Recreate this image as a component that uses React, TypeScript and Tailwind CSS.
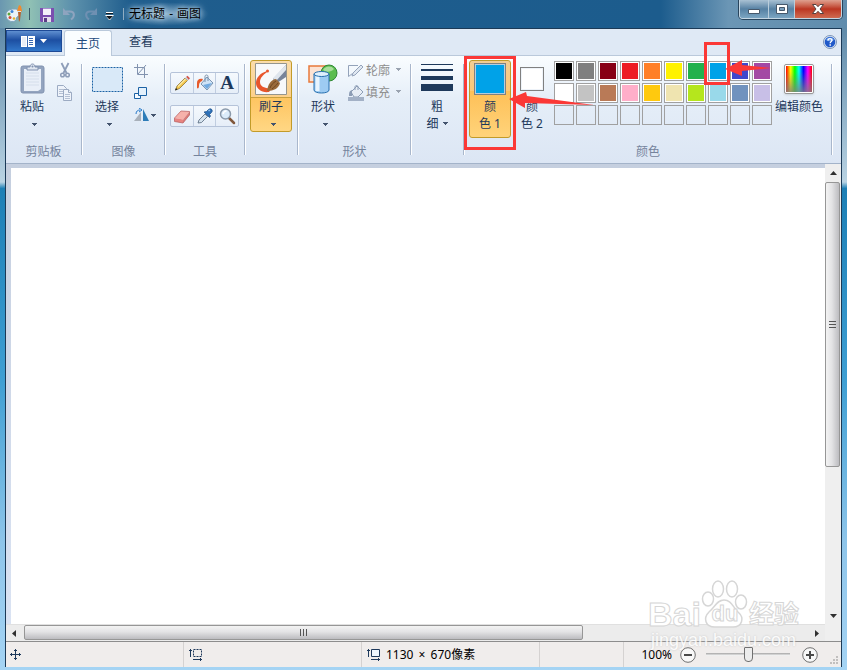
import type { ReactNode } from 'react'

const palette = [
    { name: '黑色', color: 'bg-black' },
    { name: '灰色-50%', color: 'bg-[#7f7f7f]' },
    { name: '深红色', color: 'bg-[#880015]' },
    { name: '红色', color: 'bg-[#ed1c24]' },
    { name: '橙色', color: 'bg-[#ff7f27]' },
    { name: '黄色', color: 'bg-[#fff200]' },
    { name: '绿色', color: 'bg-[#22b14c]' },
    { name: '青绿', color: 'bg-[#00a2e8]' },
    { name: '靛青', color: 'bg-[#3f48cc]' },
    { name: '紫色', color: 'bg-[#a349a4]' },
    { name: '白色', color: 'bg-white' },
    { name: '灰色-25%', color: 'bg-[#c3c3c3]' },
    { name: '褐色', color: 'bg-[#b97a57]' },
    { name: '玫瑰色', color: 'bg-[#ffaec9]' },
    { name: '金色', color: 'bg-[#ffc90e]' },
    { name: '浅黄色', color: 'bg-[#efe4b0]' },
    { name: '酸橙色', color: 'bg-[#b5e61d]' },
    { name: '淡青绿色', color: 'bg-[#99d9ea]' },
    { name: '蓝灰色', color: 'bg-[#7092be]' },
    { name: '淡紫色', color: 'bg-[#c8bfe7]' },
]

function Caret({ className = 'text-[#44546e]' }: { className?: string }) {
    return (
        <svg className={`shrink-0 ${className}`} width="5" height="3" viewBox="0 0 5 3" shapeRendering="crispEdges">
            <path d="M0 0h5v1H4v1H3v1H2V2H1V1H0z" fill="currentColor" />
        </svg>
    )
}

function Separator() {
    return <div className="my-2 w-[2px] shrink-0 border-r border-l border-r-white border-l-[#a9b7cc]" />
}

function Group({ label, className, children }: { label?: string; className: string; children: ReactNode }) {
    return (
        <section className={`flex shrink-0 flex-col pt-1 ${className}`}>
            <div className="flex flex-1 items-start">{children}</div>
            <h2 className="mb-[3px] h-4 text-center text-[#74839c]">{label}</h2>
        </section>
    )
}

function BigButton({ label, children, className = 'w-[42px]' }: { label: string; children: ReactNode; className?: string }) {
    return (
        <button className={`flex h-[72px] flex-col items-center pt-[3px] ${className}`}>
            <span className="flex h-8 items-center justify-center">{children}</span>
            <span className="mt-1 leading-4">{label}</span>
            <span className="mt-2 ml-1"><Caret /></span>
        </button>
    )
}

function PaintLogo() {
    return (
        <svg width="18" height="18" viewBox="0 0 18 18">
            <path d="M1 10C1 6 5 4 9 4c4 0 6 2 6 5 0 2-2 2-3 3s0 3-2 4c-4 2-9-1-9-6z" fill="#e9f2f8" stroke="#7fa3bc" />
            <circle cx="4" cy="9" r="1.500" fill="#5ba53b" />
            <circle cx="7" cy="6.500" r="1.500" fill="#3d82d6" />
            <circle cx="5" cy="12.500" r="1.500" fill="#d64a35" />
            <circle cx="9" cy="13.500" r="1.300" fill="#e2b32b" />
            <path d="M14 0l2 1 1 5-2 2-3-2z" fill="#f08a2c" />
            <path d="M13 7h3l-1 8-1 2z" fill="#b5612a" />
            <path d="M12 6h4v1h-4z" fill="#dce4ea" />
        </svg>
    )
}

function TitleBar() {
    return (
        <header className="flex h-7 shrink-0 items-start justify-between">
            <div className="flex h-7 items-center">
                <PaintLogo />
                <div className="ml-[6px] h-3 w-px bg-[#3b5c6b]" />
                <button aria-label="保存" className="mt-px ml-[10px]">
                    <svg width="14" height="14" viewBox="0 0 14 14">
                        <path d="M0 0h14v14H1L0 13z" fill="#7b4fb0" />
                        <path d="M3 0h8v7H3z" fill="#f3f1fa" />
                        <path d="M3 0h8v1H3z" fill="#a98bd0" />
                        <path d="M3 9h8v5H3z" fill="#e3dcec" />
                        <path d="M4 10h3v4H4z" fill="#5a3b86" />
                    </svg>
                </button>
                <button aria-label="撤消" className="ml-2 text-[#8ea4bf]">
                    <svg width="14" height="14" viewBox="0 0 14 14" fill="none" stroke="currentColor">
                        <path d="M4 4.500h4c5 0 5 5 1 8" strokeWidth="2" />
                        <path d="M1 1v7h7z" fill="currentColor" stroke="none" />
                    </svg>
                </button>
                <button aria-label="重做" className="ml-2 text-[#6f90b2]">
                    <svg width="14" height="14" viewBox="0 0 14 14" fill="none" stroke="currentColor">
                        <path d="M10 4.500H6C1 4.500 1 9.500 5 12.500" strokeWidth="2" />
                        <path d="M13 1v7H6z" fill="currentColor" stroke="none" />
                    </svg>
                </button>
                <button aria-label="自定义快速访问工具栏" className="mt-[3px] ml-[7px]">
                    <svg width="9" height="8" viewBox="0 0 9 8">
                        <path d="M1 0h7v2H1zM0 3h9L5 8H4z" fill="#fff" />
                        <path d="M1 1h7v1H1zM1 4h7L4.500 7.500z" fill="#101820" />
                    </svg>
                </button>
                <div className="ml-[9px] h-3 w-px bg-[#8fabc1]" />
                <h1 className="-ml-[3px] bg-radial from-[#b5d0e3c0] to-transparent to-70% px-2 py-1 text-black [text-shadow:0_0_5px_#cfe1ee,0_0_9px_#b5d0e3]">
                    无标题 <span className="mx-px">-</span> 画图
                </h1>
            </div>
            <div className="flex h-[19px] overflow-hidden rounded-b-[4px] border border-t-0 border-[#c4d6e3] shadow-[0_0_0_1px_#29455d]">
                <button aria-label="最小化" className="flex w-7 items-center justify-center bg-linear-to-b from-[#a9c1d3] via-[#5681a3] via-50% to-[#7ba5c2] pt-1">
                    <svg width="12" height="5" viewBox="0 0 12 5"><path d="M.5.5h11v4H.5z" fill="#fff" stroke="#46586b" /></svg>
                </button>
                <button aria-label="最大化" className="flex w-[27px] items-center justify-center border-r border-l border-[#b9cddb] bg-linear-to-b from-[#a9c1d3] via-[#5681a3] via-50% to-[#7ba5c2]">
                    <svg width="12" height="10" viewBox="0 0 12 10">
                        <path d="M.5.5h11v9H.5z" fill="#fff" stroke="#46586b" />
                        <path d="M3.500 3.500h5v3h-5z" fill="#7ba0bd" stroke="#46586b" />
                    </svg>
                </button>
                <button aria-label="关闭" className="flex w-[46px] items-center justify-center bg-linear-to-b from-[#dea08f] via-[#bb3521] via-50% to-[#cf6a50]">
                    <svg width="12" height="10" viewBox="0 0 12 10">
                        <path d="M.5.5h3.500l2 2.200L8 .5h3.500L8 5l3.500 4.500H8L6 7.300 4 9.500H.5L4 5z" fill="#fff" stroke="#57413f" />
                    </svg>
                </button>
            </div>
        </header>
    )
}

function TabRow() {
    return (
        <nav className="flex h-[27px] shrink-0 items-end border-b border-[#bac9db] bg-[#dfe9f5]">
            <button aria-label="画图" className="mb-[3px] flex h-[22px] w-14 items-center justify-center gap-[5px] border border-[#1e4a96] bg-linear-to-b from-[#5f8fd0] via-[#1d4fa2] via-45% to-[#3277c9]">
                <svg width="14" height="11" viewBox="0 0 14 11" shapeRendering="crispEdges">
                    <path d="M0 0h14v11H0z" fill="#fff" />
                    <path d="M6 0h1v11H6zM8 2h4v1H8zM8 4h4v1H8zM8 6h4v1H8zM8 8h4v1H8z" fill="#3a69b0" />
                    <path d="M1 1h4v9H1z" fill="#e8edf5" />
                </svg>
                <svg width="7" height="4" viewBox="0 0 7 4"><path d="M0 0h7L3.500 4z" fill="#fff" /></svg>
            </button>
            <a href="#home" className="-mb-px ml-[2px] flex h-[26px] w-12 items-center justify-center rounded-t-[3px] border border-b-0 border-[#bac9db] bg-[#fafdff] text-[#1e4a7d]">
                主页
            </a>
            <a href="#view" className="flex h-[26px] w-[58px] items-center justify-center text-[#1e395b]">查看</a>
            <button aria-label="帮助" className="mr-[4px] mb-[6px] ml-auto">
                <svg width="14" height="14" viewBox="0 0 14 14">
                    <circle cx="7" cy="7" r="6.500" fill="#dbe8f8" stroke="#7b93b5" />
                    <circle cx="7" cy="7" r="5.300" fill="#2059c9" />
                    <path d="M3 5a4.500 4.500 0 018 0c-2 1-5 2-8 0z" fill="#6ea2ec" />
                    <path d="M5 5.500C5 3 9 3 9 5.300 9 6.500 7.200 6.500 7.200 8.200M7.200 9.300v1.400" fill="none" stroke="#fff" strokeWidth="1.400" />
                </svg>
            </button>
        </nav>
    )
}

function ClipboardGroup() {
    return (
        <Group label="剪贴板" className="w-[75px]">
            <BigButton label="粘贴" className="ml-[5px] w-[42px]">
                <svg width="26" height="32" viewBox="0 0 26 32">
                    <rect x="2" y="3" width="23" height="27" rx="2" fill="#93a4bf" stroke="#8192b0" />
                    <path d="M5 6h17v20l-3 2H5z" fill="#e9eff8" />
                    <path d="M7 10h13M7 13h13M7 16h13M7 19h13M7 22h13" stroke="#d5deeb" />
                    <path d="M8 7V4h3c0-4 5-4 5 0h3v3z" fill="#dfe6f0" stroke="#8192b0" />
                    <circle cx="13.500" cy="3.500" r="1" fill="#8192b0" />
                </svg>
            </BigButton>
            <div className="mt-[2px] ml-1 flex flex-col gap-[6px]">
                <button aria-label="剪切">
                    <svg width="16" height="17" viewBox="0 0 16 17" fill="none" stroke="#8d9db8">
                        <path d="M4.500 1l5 10M11.500 1l-5 10" strokeWidth="1.800" />
                        <circle cx="5.500" cy="13" r="1.800" strokeWidth="1.500" />
                        <circle cx="10.500" cy="13" r="1.800" strokeWidth="1.500" />
                    </svg>
                </button>
                <button aria-label="复制">
                    <svg width="16" height="17" viewBox="0 0 16 17" fill="#eef3fa" stroke="#9cabc3">
                        <path d="M.5.5h6l3 3v8h-9z" />
                        <path d="M2 4.500h4M2 6.500h4M2 8.500h4" stroke="#b4c0d3" />
                        <path d="M6.500 4.500h5l3 3v8h-8z" />
                        <path d="M11.500 4.500v3h3" />
                        <path d="M8 9.500h5M8 11.500h5M8 13.500h5" stroke="#b4c0d3" />
                    </svg>
                </button>
            </div>
        </Group>
    )
}

function ImageGroup() {
    return (
        <Group label="图像" className="w-[81px]">
            <BigButton label="选择" className="ml-[3px] w-[42px]">
                <svg width="32" height="26" viewBox="0 0 32 26">
                    <rect x="1.500" y="1.500" width="30" height="24" fill="#d9e9f8" stroke="#1c62a5" strokeDasharray="2 1" />
                </svg>
            </BigButton>
            <div className="mt-1 ml-[6px] flex flex-col items-start gap-2">
                <button aria-label="裁剪">
                    <svg width="14" height="14" viewBox="0 0 14 14" fill="none" stroke="#8293af">
                        <path d="M3.500 0v10.500H14M0 3.500h10.500V14" />
                        <path d="M4 10l8-9" />
                    </svg>
                </button>
                <button aria-label="重新调整大小">
                    <svg width="14" height="14" viewBox="0 0 14 14" fill="#f5faff" stroke="#1c62a5">
                        <path d="M.5 7.500h6v5h-6z" />
                        <path d="M4.500 1.500h8v8h-8z" fill="#e4f1fc" />
                    </svg>
                </button>
                <button aria-label="旋转" className="flex items-center gap-px">
                    <svg width="16" height="14" viewBox="0 0 16 14">
                        <path d="M7 4v9H0z" fill="#a8b0ba" />
                        <path d="M9 1l6 12H9z" fill="#2d7cb8" />
                        <path d="M2 6c0-3 2-4 4-4M5 0l3 2-3 2" fill="none" stroke="#2679c9" />
                    </svg>
                    <Caret />
                </button>
            </div>
        </Group>
    )
}

function ToolRow({ tools }: { tools: { name: string; icon: ReactNode }[] }) {
    return (
        <div className="flex h-[22px] w-[69px] divide-x divide-[#c0cde0] rounded-[2px] border border-[#b5c3d9] bg-linear-to-b from-[#f5f9fd] to-[#e6eef8]">
            {tools.map((tool) => (
                <button key={tool.name} aria-label={tool.name} className="flex flex-1 items-center justify-center">
                    {tool.icon}
                </button>
            ))}
        </div>
    )
}

function ToolsGroup() {
    const pencil = (
        <svg width="18" height="18" viewBox="0 0 18 18">
            <path d="M2.500 16l1.500-4 8-8 2.500 2.500-8 8z" fill="#f3c64c" stroke="#8c7334" strokeWidth=".8" />
            <path d="M5 12.500l7.500-7.500" stroke="#fbe9a4" strokeWidth="1.300" />
            <path d="M13 3l1.500-1.200 2.500 2.500L15.500 6z" fill="#d4574c" />
            <path d="M12 4l1-1 2.500 2.500-1 1z" fill="#c9d2dd" />
            <path d="M2 16.500l1-2.500 1.500 1.500z" fill="#202020" />
        </svg>
    )
    const bucket = (
        <svg width="18" height="18" viewBox="0 0 18 18">
            <path d="M5 10l6-7 6 6-6 7z" fill="#cfe3f6" stroke="#627f9f" strokeWidth=".8" />
            <path d="M7 11l9-2-5 6z" fill="#70a9df" />
            <path d="M9 8V2.500c0-2 3-2 3 0V7" fill="none" stroke="#7990aa" />
            <path d="M7 5C3 4 1 6 1 9v5c1 1 2 0 2-2 0-3 1-4 3-5z" fill="#e75b2b" />
        </svg>
    )
    const text = <span className="font-['Liberation_Serif',serif] text-[19px] leading-5 font-bold text-[#1e395b]">A</span>
    const eraser = (
        <svg width="18" height="18" viewBox="0 0 18 18">
            <path d="M1.500 11L8 4l8.500.5-6.500 8z" fill="#f6b1aa" />
            <path d="M1.500 11l8.500 1.500V16l-8.500-1.500z" fill="#e88480" />
            <path d="M10 12.500l6.500-8V8L10 16z" fill="#d97c79" />
            <path d="M1.500 11L8 4l8.500.5V8L10 16l-8.500-1.500z" fill="none" stroke="#b5595a" strokeWidth=".7" />
        </svg>
    )
    const picker = (
        <svg width="18" height="18" viewBox="0 0 18 18">
            <path d="M2 16l1-3 6-6 2.500 2.500-6 6z" fill="#d5e2ed" stroke="#54677c" strokeWidth=".8" />
            <path d="M8 5l5.500 5.500 1-1.500-1-1.500 2-2c2-2-.5-5-3-3l-2 2z" fill="#2c70b8" stroke="#1e4d83" strokeWidth=".7" />
            <path d="M12.500 4l1.500-1" stroke="#8ec0ee" strokeWidth="1.500" />
        </svg>
    )
    const magnifier = (
        <svg width="18" height="18" viewBox="0 0 18 18">
            <path d="M11 11l5 5" stroke="#80583c" strokeWidth="2.500" strokeLinecap="round" />
            <circle cx="7.500" cy="7" r="5" fill="#dbecfa" stroke="#8b9aab" strokeWidth="1.500" />
            <path d="M5 7c.5-2 1.500-3 3.500-3" fill="none" stroke="#fff" strokeWidth="1.500" />
        </svg>
    )
    return (
        <Group label="工具" className="w-[78px]">
            <div className="mt-3 ml-1 flex flex-col gap-[11px]">
                <ToolRow tools={[{ name: '铅笔', icon: pencil }, { name: '用颜色填充', icon: bucket }, { name: '文本', icon: text }]} />
                <ToolRow tools={[{ name: '橡皮擦', icon: eraser }, { name: '颜色选取器', icon: picker }, { name: '放大镜', icon: magnifier }]} />
            </div>
        </Group>
    )
}

function BrushGroup() {
    return (
        <Group className="w-[51px]">
            <BigButton
                label="刷子"
                className="ml-1 w-[42px] rounded-[3px] border border-[#c29b29] bg-[linear-gradient(to_bottom,#fbdcaa,#fcd08a_36px,#c9a03c_36px,#c9a03c_37px,#fec561_37px,#ffd784)] pt-[2px]!"
            >
                <svg width="32" height="32" viewBox="0 0 32 32">
                    <path d="M.5.5h31v31H.5z" fill="#f7f8fa" stroke="#95958d" />
                    <path d="M31 2v12l-9 6-4-4z" fill="#778399" />
                    <path d="M31 2L18 15l3 3L31 7z" fill="#dfe5ed" />
                    <path d="M12 8C5 10 1 15 1 20c0 6 6 10 13 9l3-4c-6 1-12-1-12-6 0-4 3-7 7-10z" fill="#e8552b" />
                    <circle cx="12.500" cy="8" r="1.500" fill="#e8552b" />
                    <path d="M12 28c1-6 3-11 9-12l4 4c-1 5-6 8-13 8z" fill="#9a6a3b" />
                    <path d="M15 25c1-3 3-5 6-7M17 26c2-2 4-3 6-6" fill="none" stroke="#6f4620" />
                </svg>
            </BigButton>
        </Group>
    )
}

function ShapesGroup() {
    return (
        <Group label="形状" className="w-[111px]">
            <BigButton label="形状" className="ml-[3px] w-[42px]">
                <svg width="30" height="30" viewBox="0 0 30 30">
                    <rect x="1" y="2" width="18" height="16" fill="#fce3d3" stroke="#e8793b" strokeWidth="1.500" />
                    <circle cx="21" cy="9" r="8" fill="#5bbd4f" stroke="#318a36" />
                    <path d="M15 6c2-4 8-5 11-1-3 3-7 4-11 1z" fill="#a9dd9c" />
                    <path d="M6 10v16c0 4 15 4 15 0V10z" fill="#9dcbf2" stroke="#276fae" />
                    <path d="M9.500 12v15" stroke="#e8f5ff" strokeWidth="4" />
                    <ellipse cx="13.500" cy="10" rx="7.500" ry="2.500" fill="#dff0fd" stroke="#276fae" />
                </svg>
            </BigButton>
            <div className="mt-[3px] ml-1 flex flex-col gap-[6px] text-[#8d8d8d]">
                <button className="flex h-4 items-center">
                    <svg width="16" height="16" viewBox="0 0 16 16" fill="none" stroke="#94a3ba">
                        <path d="M10 2.500H.5v11l4-3" />
                        <path d="M4 13l1-3 8-8 2 2-8 8z" fill="#dfe7f1" />
                    </svg>
                    <span className="ml-[2px]">轮廓</span>
                    <span className="ml-[6px]"><Caret className="mb-1 inline text-[#9aa3b0]" /></span>
                </button>
                <button className="flex h-4 items-center">
                    <svg width="16" height="16" viewBox="0 0 16 16">
                        <path d="M3 7l6-6 6 6-5 5H6z" fill="#e7edf5" stroke="#8d9db5" />
                        <path d="M7 5V2c0-2 3-2 3 0v3" fill="none" stroke="#8d9db5" />
                        <path d="M4 5C1 6 1 8 1 11h3V8z" fill="#8d9db5" />
                        <path d="M0 12h16v4H0z" fill="#a3b1c6" />
                    </svg>
                    <span className="ml-[2px]">填充</span>
                    <span className="ml-[6px]"><Caret className="mb-1 inline text-[#9aa3b0]" /></span>
                </button>
            </div>
        </Group>
    )
}

function SizeGroup() {
    return (
        <Group className="w-[51px]">
            <button className="ml-1 flex w-[42px] flex-col items-center pt-1">
                <span className="flex w-8 flex-col">
                    <span className="h-px bg-[#1e395b]" />
                    <span className="mt-1 h-[2px] bg-[#1e395b]" />
                    <span className="mt-[5px] h-1 bg-[#1e395b]" />
                    <span className="mt-1 h-[7px] bg-[#1e395b]" />
                </span>
                <span className="mt-[7px] leading-[17px]">粗</span>
                <span className="flex items-center gap-1 leading-[17px]">细 <Caret /></span>
            </button>
        </Group>
    )
}

function ColorsGroup() {
    return (
        <Group label="颜色" className="relative w-[366px]">
            <button className="ml-1 flex h-[78px] w-[42px] flex-col items-center rounded-[3px] border border-[#c29b29] bg-[linear-gradient(to_bottom,#f3cd94,#fcc877_30px,#fec057_30px,#ffd37a)] pt-[2px]">
                <span className="h-8 w-8 border border-[#808080] bg-[#00a2e8] shadow-[inset_0_0_0_1px_#b9cddb]" />
                <span className="mt-[3px] leading-[17px]">颜<br />色 1</span>
            </button>
            <button className="flex h-[78px] w-[42px] flex-col items-center pt-[7px]">
                <span className="h-6 w-6 border border-[#808080] bg-white shadow-[inset_0_0_0_1px_#eef3f9]" />
                <span className="mt-[7px] leading-[17px]">颜<br />色 2</span>
            </button>
            <div className="mt-px ml-[1px] grid grid-cols-10 gap-[2px]">
                {palette.map((swatch) => (
                    <button key={swatch.name} aria-label={swatch.name} className="h-5 w-5 border border-[#a0a0a0] bg-white p-px">
                        <span className={`block h-full ${swatch.color}`} />
                    </button>
                ))}
                {Array.from({ length: 10 }, (_, i) => (
                    <button key={i} aria-label={`自定义颜色 ${i + 1}`} className="h-5 w-5 border border-[#a0a0a0]" />
                ))}
            </div>
            <button className="ml-[3px] flex w-12 flex-col items-center pt-1 whitespace-nowrap">
                <span className="flex h-[30px] w-[30px] rounded-[2px] border border-[#999] bg-white p-px shadow">
                    <span className="flex-1 bg-[linear-gradient(to_bottom,transparent_20%,#808080d0),linear-gradient(to_right,red,#ff0_18%,#0f0_34%,#0ff_50%,#00f_67%,#f0f_84%,red)]" />
                </span>
                <span className="mt-[5px] leading-4">编辑颜色</span>
            </button>

            <div className="absolute top-0 -left-px h-[94px] w-[52px] border-3 border-[#fb3836]" />
            <svg className="absolute top-9 left-11" width="85" height="17" viewBox="0 0 85 17" fill="#fb3836">
                <path d="M0 7L17 0l1 4 67 9-69-2v5z" />
            </svg>
            <div className="absolute -top-[14px] left-[239px] h-[43px] w-[26px] border-3 border-[#fb3836]" />
            <svg className="absolute top-1 left-[260px]" width="46" height="17" viewBox="0 0 46 17" fill="#fb3836">
                <path d="M0 9l17-9v5l29 3-29 3v5z" />
            </svg>
        </Group>
    )
}

function ScrollArrow({ label, path }: { label: string; path: string }) {
    return (
        <button aria-label={label} className="flex h-[17px] w-4 shrink-0 items-center justify-center">
            <svg width="7" height="7" viewBox="0 0 7 7"><path d={path} fill="#303030" /></svg>
        </button>
    )
}

function Workspace() {
    return (
        <main className="flex min-h-0 flex-1 bg-[#ececec]">
            <div className="flex min-w-0 flex-1 flex-col">
                <div className="flex flex-1 bg-linear-to-b from-[#c5cfdf] to-[#dae3f3] pt-1 pl-[5px]">
                    <div className="flex-1 bg-white" />
                </div>
                <div className="flex h-[17px] shrink-0 items-center border-t border-[#e0e0e0] bg-[#ececec]">
                    <ScrollArrow label="向左滚动" path="M5 0v7L1 3.500z" />
                    <div className="flex h-full flex-1">
                        <div className="ml-[2px] flex h-[15px] w-[71%] items-center justify-center gap-[2px] rounded-[2px] border border-[#969696] bg-linear-to-b from-[#f3f3f3] via-[#e3e3e5] via-45% to-[#bcbcc0]">
                            <i className="h-[7px] w-px bg-[#555]" />
                            <i className="h-[7px] w-px bg-[#555]" />
                            <i className="h-[7px] w-px bg-[#555]" />
                        </div>
                    </div>
                    <ScrollArrow label="向右滚动" path="M1 0l4 3.500L1 7z" />
                </div>
            </div>
            <div className="flex w-4 shrink-0 flex-col bg-[#efefef] pt-px pb-[17px]">
                <ScrollArrow label="向上滚动" path="M0 5h7L3.500 1z" />
                <div className="flex-1">
                    <div className="flex h-[67%] w-[15px] flex-col items-center justify-center gap-[2px] rounded-[2px] border border-[#969696] bg-linear-to-r from-[#f3f3f3] via-[#e3e3e5] via-45% to-[#bcbcc0]">
                        <i className="h-px w-[7px] bg-[#555]" />
                        <i className="h-px w-[7px] bg-[#555]" />
                        <i className="h-px w-[7px] bg-[#555]" />
                    </div>
                </div>
                <ScrollArrow label="向下滚动" path="M0 2h7L3.500 6z" />
            </div>
        </main>
    )
}

function StatusBar() {
    return (
        <footer className="flex h-[26px] shrink-0 border-t border-[#8d8d8d] bg-[#f0edec] text-black">
            <div className="flex w-[178px] items-center border-r border-[#d5d2d1] pl-1">
                <svg width="11" height="11" viewBox="0 0 11 11" shapeRendering="crispEdges">
                    <path d="M5 0h1v1h1v1H6v3h3V4h1v1h1v1h-1v1H9V6H6v3h1v1H6v1H5v-1H4V9h1V6H2v1H1V6H0V5h1V4h1v1h3V2H4V1h1z" fill="#1e395b" />
                </svg>
            </div>
            <div className="flex w-[178px] items-center border-r border-[#d5d2d1] pl-[5px]">
                <svg width="14" height="13" viewBox="0 0 14 13" fill="none" stroke="#1e395b">
                    <path d="M1.500 1v8M0 2.500h3M4 11.500h9M11.500 10v3" />
                    <path d="M4.500 1.500h8v7h-8z" strokeDasharray="2 1" />
                </svg>
            </div>
            <div className="flex w-[178px] items-center border-r border-[#d5d2d1] pl-[5px]">
                <svg width="14" height="13" viewBox="0 0 14 13" fill="none" stroke="#1e395b">
                    <path d="M1.500 1v8M0 2.500h3M4 11.500h9M11.500 10v3" />
                    <path d="M4.500 1.500h8v7h-8z" fill="#eef6fd" />
                </svg>
                <span className="ml-[5px]">1130 <span className="mx-[2px]">×</span> 670像素</span>
            </div>
            <div className="w-[84px] border-r border-[#d5d2d1]" />
            <div className="relative ml-auto flex items-center pr-[23px]">
                <label htmlFor="zoom">100%</label>
                <button aria-label="缩小" className="ml-2">
                    <svg width="16" height="16" viewBox="0 0 16 16">
                        <circle cx="8" cy="8" r="7.300" fill="#f8f8f8" stroke="#707070" />
                        <path d="M4 7h8v2H4z" fill="#4a4a4a" />
                    </svg>
                </button>
                <input
                    id="zoom"
                    type="range"
                    min="0"
                    max="100"
                    defaultValue="50"
                    className="mr-3 ml-[10px] h-4 w-[84px] appearance-none bg-linear-to-b from-[#a5a5a5] to-white bg-[length:100%_3px] bg-center bg-no-repeat [&::-webkit-slider-thumb]:h-[15px] [&::-webkit-slider-thumb]:w-[9px] [&::-webkit-slider-thumb]:appearance-none [&::-webkit-slider-thumb]:rounded-t-[1px] [&::-webkit-slider-thumb]:rounded-b-[4px] [&::-webkit-slider-thumb]:border [&::-webkit-slider-thumb]:border-[#707070] [&::-webkit-slider-thumb]:bg-[#ececec]"
                />
                <button aria-label="放大">
                    <svg width="16" height="16" viewBox="0 0 16 16">
                        <circle cx="8" cy="8" r="7.300" fill="#f8f8f8" stroke="#707070" />
                        <path d="M4 7h3V4h2v3h3v2H9v3H7V9H4z" fill="#4a4a4a" />
                    </svg>
                </button>
                <svg className="absolute right-[2px] bottom-[2px]" width="9" height="9" viewBox="0 0 9 9">
                    <path d="M6 0h2v2H6zM3 3h2v2H3zM6 3h2v2H6zM0 6h2v2H0zM3 6h2v2H3zM6 6h2v2H6z" fill="#c1bfbe" />
                </svg>
            </div>
        </footer>
    )
}

function Watermark() {
    return (
        <div className="pointer-events-none absolute right-12 bottom-[22px] flex flex-col items-center gap-1 font-['Liberation_Sans','Noto_Sans_CJK_SC',sans-serif] text-white select-none">
            <div className="flex items-end font-bold [-webkit-text-stroke:1px_#d6d6d6]">
                <span className="text-[34px] leading-7">Bai</span>
                <span className="relative flex h-12 w-12 items-end justify-center">
                    <svg className="absolute inset-0" width="48" height="48" viewBox="0 0 48 48" fill="#fff" stroke="#d6d6d6" strokeWidth="1.500">
                        <ellipse cx="7" cy="19" rx="5.500" ry="7" />
                        <ellipse cx="17" cy="9" rx="5.500" ry="8" />
                        <ellipse cx="31" cy="9" rx="5.500" ry="8" />
                        <ellipse cx="40" cy="22" rx="5.500" ry="7" />
                        <path d="M23 20c7 0 9 7 14 12 7 6 4 15-5 15H14C4 47 2 38 8 32c6-5 8-12 15-12z" />
                    </svg>
                    <span className="relative text-[22px] leading-7">du</span>
                </span>
                <span className="text-[25px] leading-7">经验</span>
            </div>
            <div className="text-[18px] leading-4 opacity-80 [text-shadow:0_0_2px_#bbb]">jingyan.baidu.com</div>
        </div>
    )
}

export default function App() {
    return (
        <div className="relative flex h-screen flex-col overflow-hidden bg-[linear-gradient(to_right,#6a97b0,#8fc0b4_30px,#5f93ad_70px,#1f5d8d_130px,#1c5c8d_78%,#6b96b5_86%,#5f8cad)] bg-[length:100%_28px] bg-no-repeat px-[5px] pb-[3px] font-['Noto_Sans','Noto_Sans_CJK_SC',sans-serif] text-xs leading-4 text-[#1e395b]">
            <div className="absolute inset-x-0 top-7 bottom-0 -z-10 bg-[linear-gradient(to_bottom,#5f8aa9,#b9d3e3_24%,#1d7fb5_25%,#3f9fd3_55%,#8ec5ea_80%,#a5d4f4)]" />
            <TitleBar />
            <div className="flex min-h-0 flex-1 flex-col border-x border-t border-[#1b3a57]">
                <TabRow />
                <div className="flex h-[108px] shrink-0 border-b border-[#a3b3c9] bg-linear-to-b from-[#fafdff] via-[#e5eef8] via-40% to-[#dce6f4]">
                    <ClipboardGroup />
                    <Separator />
                    <ImageGroup />
                    <Separator />
                    <ToolsGroup />
                    <Separator />
                    <BrushGroup />
                    <Separator />
                    <ShapesGroup />
                    <Separator />
                    <SizeGroup />
                    <Separator />
                    <ColorsGroup />
                    <Separator />
                </div>
                <Workspace />
                <StatusBar />
            </div>
            <Watermark />
        </div>
    )
}
